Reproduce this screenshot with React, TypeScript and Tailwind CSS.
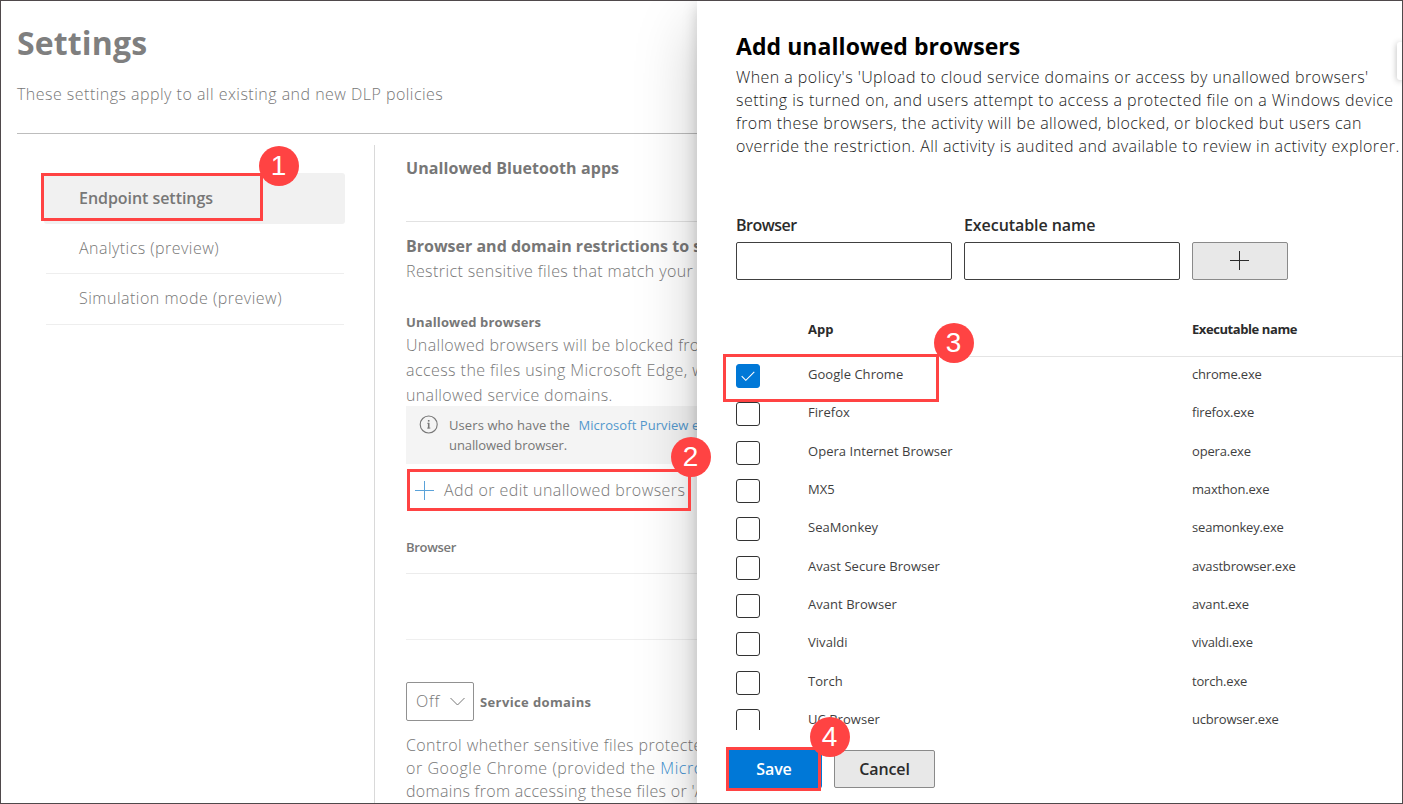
import type { ReactNode } from 'react';

type AppRow = { app: string; exe: string; height: string; checked?: boolean };

const apps: AppRow[] = [
  { app: 'Google Chrome', exe: 'chrome.exe', height: 'h-[38px]', checked: true },
  { app: 'Firefox', exe: 'firefox.exe', height: 'h-[39px]' },
  { app: 'Opera Internet Browser', exe: 'opera.exe', height: 'h-[38px]' },
  { app: 'MX5', exe: 'maxthon.exe', height: 'h-[38px]' },
  { app: 'SeaMonkey', exe: 'seamonkey.exe', height: 'h-[39px]' },
  { app: 'Avast Secure Browser', exe: 'avastbrowser.exe', height: 'h-[38px]' },
  { app: 'Avant Browser', exe: 'avant.exe', height: 'h-[38px]' },
  { app: 'Vivaldi', exe: 'vivaldi.exe', height: 'h-[39px]' },
  { app: 'Torch', exe: 'torch.exe', height: 'h-[38px]' },
  { app: 'UC Browser', exe: 'ucbrowser.exe', height: 'h-[38px]' },
];

function Badge({ className, children }: { className: string; children: ReactNode }) {
  return (
    <div
      className={`absolute z-30 flex size-10 items-center justify-center rounded-full bg-[#ff4343] pr-px font-['Liberation_Sans',sans-serif] text-[28px] font-normal leading-10 text-white ${className}`}
    >
      {children}
    </div>
  );
}

function Callout({ className }: { className: string }) {
  return <div className={`pointer-events-none absolute z-20 border-3 border-[#ff4343] ${className}`} />;
}

function PlusIcon({ className }: { className: string }) {
  return (
    <svg className={`size-[19px] ${className}`} viewBox="0 0 19 19" fill="none" stroke="currentColor" shapeRendering="crispEdges">
      <path d="M9.5 0v19M0 9.5h19" />
    </svg>
  );
}

function Nav() {
  return (
    <nav className="ml-[43px] mt-[39px] w-[301px]">
      <div className="flex h-[51px] items-center rounded-[3px] bg-[#f1f1f1] pb-px pl-[35px] font-semibold -tracking-[0.05px]">Endpoint settings</div>
      <div className="ml-0.5 mr-px flex h-[50px] items-center border-b border-[#eeeeee] pb-px pl-[33px] tracking-[0.46px]">Analytics (preview)</div>
      <div className="ml-0.5 mr-px flex h-[51px] items-center border-b border-[#eeeeee] pb-0.5 pl-[33px] tracking-[0.5px]">
        Simulation mode (preview)
      </div>
    </nav>
  );
}

function EndpointContent() {
  return (
    <section className="mt-[11px] h-[660px] w-[323px] shrink-0 overflow-hidden whitespace-nowrap border-l border-[#d9d9d9] pl-[31px]">
      <div className="flex h-[77px] items-start border-b border-[#e2e2e2] pt-3">
        <h2 className="font-bold leading-[22px] tracking-[0.08px]">Unallowed Bluetooth apps</h2>
      </div>
      <h2 className="mt-[13px] font-bold leading-[22px]">Browser and domain restrictions to sensitive data</h2>
      <p className="mt-[2px] leading-[24px] tracking-[0.41px]">Restrict sensitive files that match your policies</p>
      <h3 className="mt-[29px] text-[13px] font-bold leading-[20px] tracking-[0.15px]">Unallowed browsers</h3>
      <div className="mt-px leading-[25px]">
        <p className="tracking-[0.34px]">Unallowed browsers will be blocked from</p>
        <p className="tracking-[0.44px]">access the files using Microsoft Edge, with</p>
        <p className="tracking-[0.34px]">unallowed service domains.</p>
      </div>
      <div className="-mt-0.5 flex h-[58px] bg-[#f4f4f4] pl-[13px] pt-[9px]">
        <svg className="size-[19px] shrink-0" viewBox="0 0 19 19" fill="none" stroke="currentColor">
          <circle cx="9.7" cy="9.5" r="8.500" strokeWidth="1.1" />
          <path d="M9.7 7.800v5.600" strokeWidth="1.6" />
          <path d="M8.200 8.300h1.500M8 13.100h3.400" strokeWidth="0.800" />
          <path d="M8.9 5.800h1.6" strokeWidth="1.6" />
        </svg>
        <div className="ml-[11px] text-[13px] font-normal leading-[20px]">
          <p className="tracking-[0.09px]">
            Users who have the <span className="ml-[5px] tracking-[0.06px] text-[#5398cd]">Microsoft Purview extension</span>
          </p>
          <p className="-tracking-[0.09px]">unallowed browser.</p>
        </div>
      </div>
      <div className="flex h-[53px] items-center pl-[9px]">
        <PlusIcon className="shrink-0 text-[#5aa2d9]" />
        <span className="ml-[10px] pb-0.5 tracking-[0.42px]">Add or edit unallowed browsers</span>
      </div>
      <div className="flex h-[57px] items-start border-b border-[#ececec] pt-5">
        <h3 className="text-[13px] font-semibold leading-[20px] -tracking-[0.3px]">Browser</h3>
      </div>
      <div className="h-[66px] border-b border-[#efefef]" />
      <div className="mt-[42px] flex items-center">
        <div className="flex h-[39px] w-[68px] items-center rounded-[2px] border border-[#919191] pb-px pl-[9px]">
          <span className="w-[34px] tracking-[0.7px]">Off</span>
          <svg className="h-[9px] w-[15px]" viewBox="0 0 15 9" fill="none" stroke="currentColor">
            <path d="M.5 1 7.500 8l7-7" />
          </svg>
        </div>
        <h3 className="ml-1.5 text-[13px] font-bold leading-[20px] tracking-[0.38px]">Service domains</h3>
      </div>
      <div className="mt-[13px] leading-[23px]">
        <p className="tracking-[0.4px]">Control whether sensitive files protected</p>
        <p className="tracking-[0.55px]">
          or Google Chrome (provided the <span className="text-[#3d8fd0]">Microsoft</span>
        </p>
        <p className="tracking-[0.3px]">domains from accessing these files or &apos;Add</p>
      </div>
    </section>
  );
}

function SettingsPage() {
  return (
    <main className="w-[696px] shrink-0 overflow-hidden whitespace-nowrap text-[#777777]">
      <header className="ml-4 h-[133px] border-b border-[#bdbdbd]">
        <h1 className="pt-[20px] text-[32px] font-bold leading-[44px] tracking-[0.14px] text-[#7f7f7f]">Settings</h1>
        <p className="mt-[17px] leading-[24px] tracking-[0.475px]">These settings apply to all existing and new DLP policies</p>
      </header>
      <div className="flex justify-between">
        <Nav />
        <EndpointContent />
      </div>
    </main>
  );
}

function AppsTable() {
  return (
    <div className="mt-[25px]">
      <div className="flex h-[52px] items-center border-b border-[#e4e4e4] pb-[3px] pl-[72px] text-[13px] font-bold">
        <span className="w-[384px]">App</span>
        <span className="-tracking-[0.42px]">Executable name</span>
      </div>
      <div className="h-[373px] overflow-hidden pt-[7px] text-[13px] font-normal leading-[20px] text-[#3f3f3f]">
        {apps.map((row) => (
          <div key={row.exe} className={`flex items-start ${row.height}`}>
            <span
              className={`flex size-6 items-center justify-center rounded-[3px] border ${row.checked ? 'border-[#0078d7] bg-[#0078d7]' : 'border-[#333333] bg-white'}`}
            >
              {row.checked && (
                <svg className="mr-px h-[10px] w-[14px]" viewBox="0 0 14 10" fill="none" stroke="white" strokeWidth="1.1">
                  <path d="M.7 5.200 4.800 9.300 13.300.8" />
                </svg>
              )}
            </span>
            <span className="ml-12 w-[384px] tracking-[0.04px]">{row.app}</span>
            <span className="-tracking-[0.18px]">{row.exe}</span>
          </div>
        ))}
      </div>
    </div>
  );
}

function Panel() {
  return (
    <aside className="relative z-10 flex-1 whitespace-nowrap bg-white pl-[39px] text-[#2b2b2b] shadow-[0_26px_58px_rgba(0,0,0,0.22),0_5px_14px_rgba(0,0,0,0.18)]">
      <h1 className="pt-[29px] text-[23px] font-bold leading-[32px] tracking-[0.06px] text-black">Add unallowed browsers</h1>
      <div className="mt-1 leading-[23px] text-[#1a1a1a]">
        <p className="tracking-[0.445px]">When a policy&apos;s &apos;Upload to cloud service domains or access by unallowed browsers&apos;</p>
        <p className="tracking-[0.475px]">setting is turned on, and users attempt to access a protected file on a Windows device</p>
        <p className="tracking-[0.42px]">from these browsers, the activity will be allowed, blocked, or blocked but users can</p>
        <p className="tracking-[0.435px]">override the restriction. All activity is audited and available to review in activity explorer.</p>
      </div>
      <form className="mt-[56px] flex items-end gap-3">
        <label className="w-[216px] font-semibold leading-[22px] -tracking-[0.5px]">
          Browser
          <input className="mt-[6px] block h-[38px] w-full rounded-[2px] border border-[#404040] px-2 font-normal outline-none" />
        </label>
        <label className="w-[216px] font-semibold leading-[22px] -tracking-[0.07px]">
          Executable name
          <input className="mt-[6px] block h-[38px] w-full rounded-[2px] border border-[#404040] px-2 font-normal outline-none" />
        </label>
        <button type="button" className="flex h-[38px] w-24 items-center justify-center rounded-[2px] border border-[#8a8a8a] bg-[#e8e8e8] pb-px pr-px">
          <PlusIcon className="" />
        </button>
      </form>
      <AppsTable />
      <div className="mt-5 flex gap-3">
        <button className="-ml-[9px] h-[38px] w-[95px] rounded-[2px] bg-[#0078d7] pb-px pr-px font-semibold -tracking-[0.1px] text-white">Save</button>
        <button className="h-[38px] w-[101px] rounded-[2px] border border-[#8a8a8a] bg-[#e8e8e8] pb-px font-semibold -tracking-[0.1px]">Cancel</button>
      </div>
      <div className="absolute right-0 top-[41px] h-[38px] w-[5px] rounded-l-[3px] bg-white shadow-[0_1px_6px_rgba(0,0,0,0.3)]" />
    </aside>
  );
}

export default function App() {
  return (
    <div className="relative h-[804px] w-[1403px] overflow-hidden border border-[#4f494b] bg-white font-['Open_Sans','Noto_Sans',sans-serif] text-[16px] font-light leading-[22px]">
      <div className="flex h-full">
        <SettingsPage />
        <Panel />
      </div>
      <Callout className="left-10 top-[172px] h-12 w-[222px]" />
      <Badge className="left-[258px] top-[145px]">1</Badge>
      <Callout className="left-[406px] top-[468px] h-[42px] w-[284px]" />
      <Badge className="left-[670px] top-[436px]">2</Badge>
      <Callout className="left-[722px] top-[353px] h-12 w-[216px]" />
      <Badge className="left-[933px] top-[322px]">3</Badge>
      <Callout className="left-[725px] top-[746px] h-11 w-[95px]" />
      <Badge className="left-[809px] top-[716px]">4</Badge>
    </div>
  );
}
